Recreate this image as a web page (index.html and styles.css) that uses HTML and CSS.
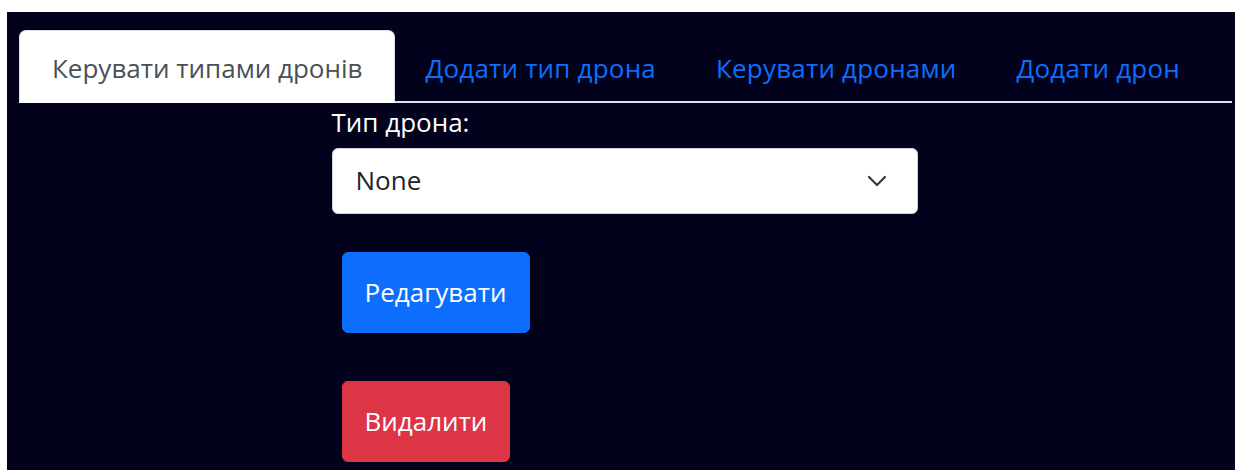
FILE: index.html
```html
<!DOCTYPE html>
<html lang="uk">
<head>
<meta charset="utf-8">
<title>Дрони</title>
<link rel="stylesheet" href="styles.css">
</head>
<body>
<div class="app">
  <ul class="tabs">
    <li class="tab active">Керувати типами дронів</li>
    <li class="tab">Додати тип дрона</li>
    <li class="tab">Керувати дронами</li>
    <li class="tab">Додати дрон</li>
  </ul>
  <form class="form">
    <label class="label" for="type">Тип дрона:</label>
    <div class="select" id="type">
      <span class="select-value">None</span>
      <svg class="chevron" width="20" height="12" viewBox="0 0 20 12"><path d="M2 2l8 8 8-8" fill="none" stroke="#343a40" stroke-width="2.2" stroke-linecap="round" stroke-linejoin="round"/></svg>
    </div>
    <div class="actions">
      <button type="button" class="btn btn-primary">Редагувати</button>
      <button type="button" class="btn btn-danger">Видалити</button>
    </div>
  </form>
</div>
</body>
</html>
```
FILE: styles.css
```css
html, body {
  margin: 0;
  background: #ffffff;
}
body {
  padding: 12px 0 0 7px;
  font-family: "Open Sans", "Noto Sans", sans-serif;
  font-size: 26px;
}
.app {
  background: #02021c;
  min-height: 458px;
  padding: 18px 3px 0 12px;
  box-sizing: border-box;
}
.tabs {
  list-style: none;
  margin: 0;
  padding: 0;
  display: flex;
  border-bottom: 2px solid #dee2e6;
}
.tab {
  padding: 18px 29px 14px;
  line-height: 39px;
  color: #0d6efd;
  border: 1px solid transparent;
  border-radius: 7px 7px 0 0;
  margin-bottom: -2px;
  letter-spacing: 0.2px;
}
.tab.active {
  background: #ffffff;
  color: #495057;
  border-color: #dee2e6 #dee2e6 #ffffff;
  padding-left: 32px;
  padding-right: 32px;
  letter-spacing: 0;
}
.form {
  width: 586px;
  margin: 0 auto;
  padding-right: 2px;
}
.label {
  display: block;
  color: #ffffff;
  line-height: 39px;
  margin-bottom: 6px;
}
.select {
  display: flex;
  align-items: center;
  justify-content: space-between;
  background: #ffffff;
  border: 1px solid #ced4da;
  border-radius: 6px;
  padding: 12px 30px 13px 23px;
  line-height: 39px;
  color: #212529;
}
.chevron {
  display: block;
}
.actions {
  display: flex;
  flex-direction: column;
  align-items: flex-start;
  gap: 48px;
  padding: 38px 0 0 10px;
}
.btn {
  font: inherit;
  line-height: 39px;
  color: #ffffff;
  border: 1px solid transparent;
  border-radius: 6px;
  padding: 20px 22px;
}
.btn-primary {
  background: #0d6efd;
  border-color: #0d6efd;
}
.btn-danger {
  background: #dc3545;
  border-color: #dc3545;
}
```
